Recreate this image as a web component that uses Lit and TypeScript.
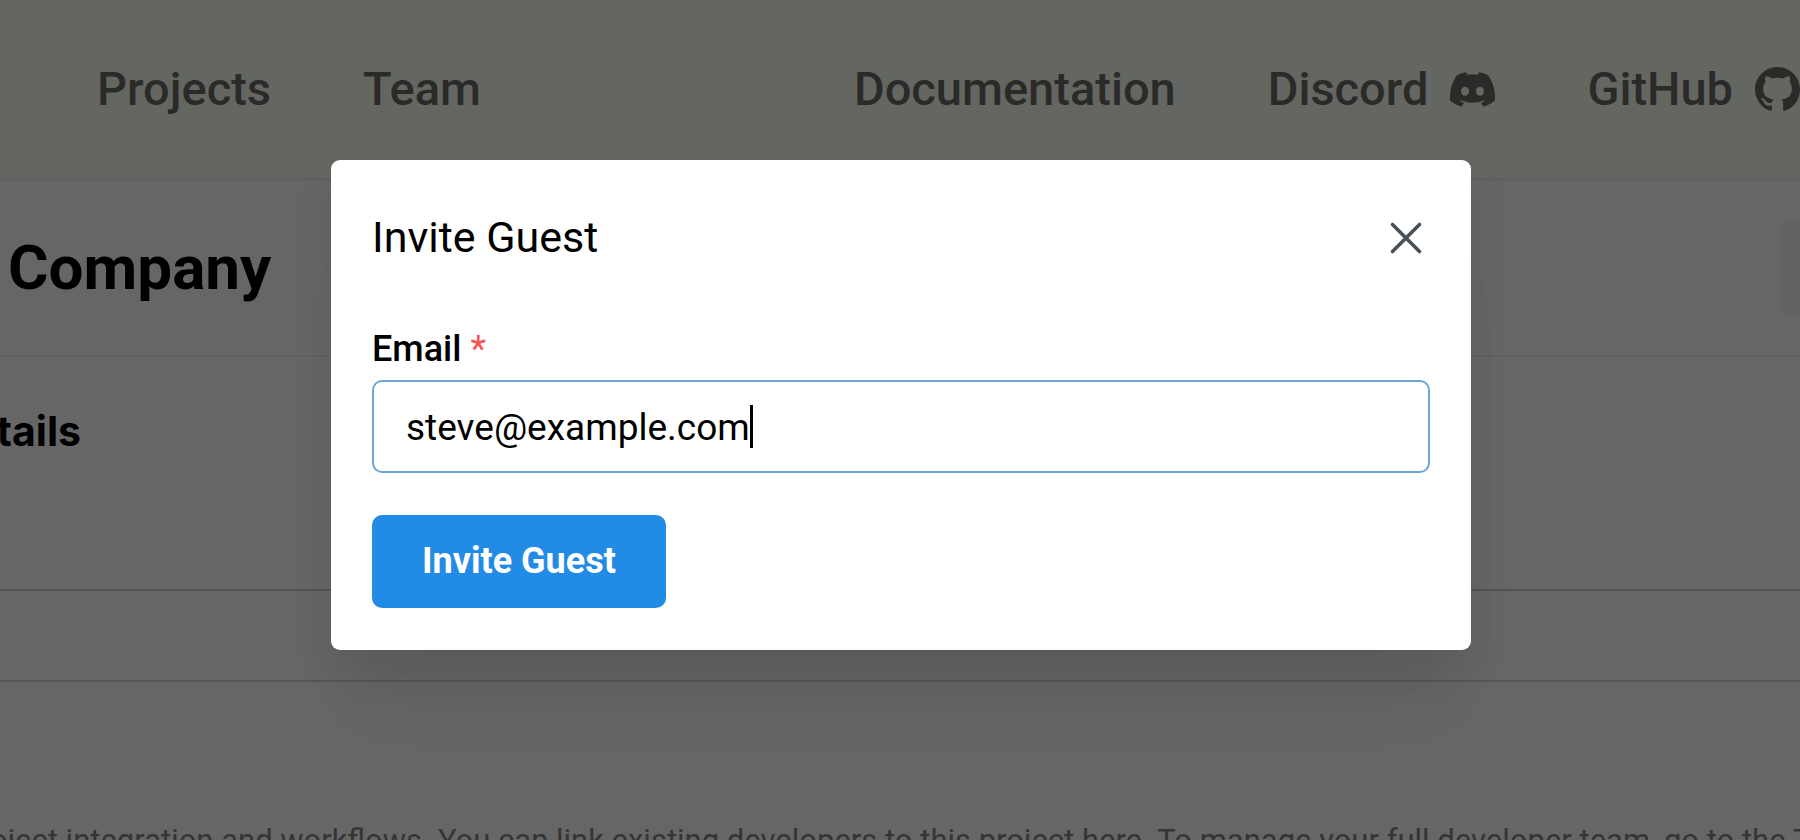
import { LitElement, html, css } from "lit";
import { customElement, state } from "lit/decorators.js";

@customElement("app-header")
class AppHeader extends LitElement {
  static styles = css`
    :host { display: block; }
    .bar {
      display: flex; align-items: center; justify-content: space-between;
      min-height: 178px; padding: 0 0 0 97px; overflow: hidden;
      background: #fafff4; border-bottom: 3px solid #f0f0f0;
    }
    .group { display: flex; align-items: center; gap: 92px; flex: none; }
    a {
      display: flex; align-items: center; gap: 22px; white-space: nowrap;
      color: #6a6d66; font: 500 47px/56px Roboto, sans-serif; text-decoration: none;
    }
    svg { width: 45px; height: 45px; fill: currentColor; display: block; flex: none; }
  `;
  render() {
    return html`<header class="bar">
      <nav class="group" aria-label="Main">
        <a href="#projects">Projects</a>
        <a href="#team">Team</a>
      </nav>
      <nav class="group" aria-label="Resources">
        <a href="#docs">Documentation</a>
        <a href="#discord">Discord
          <svg viewBox="0 0 16 16" aria-hidden="true"><path d="M13.545 2.907a13.2 13.2 0 0 0-3.257-1.011.05.05 0 0 0-.052.025c-.141.25-.297.577-.406.833a12.2 12.2 0 0 0-3.658 0 8 8 0 0 0-.412-.833.05.05 0 0 0-.052-.025c-1.125.194-2.22.534-3.257 1.011a.04.04 0 0 0-.021.018C.356 6.024-.213 9.047.066 12.032q.003.022.021.037a13.3 13.3 0 0 0 3.995 2.02.05.05 0 0 0 .056-.019q.463-.63.818-1.329a.05.05 0 0 0-.01-.059l-.018-.011a9 9 0 0 1-1.248-.595.05.05 0 0 1-.02-.066l.015-.019q.127-.095.248-.195a.05.05 0 0 1 .051-.007c2.619 1.196 5.454 1.196 8.041 0a.05.05 0 0 1 .053.007q.121.1.248.195a.05.05 0 0 1-.004.085 8 8 0 0 1-1.249.594.05.05 0 0 0-.03.03.05.05 0 0 0 .003.041c.24.465.515.909.817 1.329a.05.05 0 0 0 .056.019 13.2 13.2 0 0 0 4.001-2.02.05.05 0 0 0 .021-.037c.334-3.451-.559-6.449-2.366-9.106a.03.03 0 0 0-.02-.019m-8.198 7.307c-.789 0-1.438-.724-1.438-1.612s.637-1.613 1.438-1.613c.807 0 1.45.73 1.438 1.613 0 .888-.637 1.612-1.438 1.612m5.316 0c-.788 0-1.438-.724-1.438-1.612s.637-1.613 1.438-1.613c.807 0 1.451.73 1.438 1.613 0 .888-.631 1.612-1.438 1.612"/></svg>
        </a>
        <a href="#github">GitHub
          <svg viewBox="0 0 16 16" aria-hidden="true"><path d="M8 0C3.58 0 0 3.58 0 8c0 3.54 2.29 6.53 5.47 7.59.4.07.55-.17.55-.38 0-.19-.01-.82-.01-1.49-2.01.37-2.53-.49-2.69-.94-.09-.23-.48-.94-.82-1.13-.28-.15-.68-.52-.01-.53.63-.01 1.08.58 1.23.82.72 1.21 1.87.87 2.33.66.07-.52.28-.87.51-1.07-1.78-.2-3.64-.89-3.64-3.95 0-.87.31-1.59.82-2.15-.08-.2-.36-1.02.08-2.12 0 0 .67-.21 2.2.82.64-.18 1.32-.27 2-.27s1.36.09 2 .27c1.53-1.04 2.2-.82 2.2-.82.44 1.1.16 1.92.08 2.12.51.56.82 1.27.82 2.15 0 3.07-1.87 3.75-3.65 3.95.29.25.54.73.54 1.48 0 1.07-.01 1.93-.01 2.2 0 .21.15.46.55.38A8.01 8.01 0 0 0 16 8c0-4.42-3.58-8-8-8"/></svg>
        </a>
      </nav>
    </header>`;
  }
}

@customElement("invite-dialog")
class InviteDialog extends LitElement {
  @state() email = "steve@example.com";

  static styles = css`
    :host {
      display: block; box-sizing: border-box; width: 1140px; max-width: 90%;
      padding: 41px 41px 42px; border-radius: 9px; background: #fff; color: #000;
      font-family: Roboto, sans-serif;
      box-shadow: 0 80px 60px -28px rgba(0, 0, 0, 0.06), 0 20px 44px rgba(0, 0, 0, 0.08);
    }
    .head { display: flex; align-items: center; justify-content: space-between; }
    h2 { margin: 0; font-weight: 400; font-size: 43px; line-height: 73px; }
    .close {
      display: grid; place-items: center; width: 48px; height: 48px; padding: 0;
      border: 0; background: none; color: #495057;
    }
    .close svg { width: 36px; height: 36px; }
    form { display: flex; flex-direction: column; align-items: flex-start; padding-top: 46px; }
    label { font-weight: 500; font-size: 36px; line-height: 58px; }
    .star { color: #fa5252; font-weight: 400; }
    .field {
      display: flex; align-items: center; align-self: stretch; box-sizing: border-box;
      height: 93px; margin: 2px 0 42px; padding: 0 32px;
      border: 2px solid #6ba5da; border-radius: 10px;
    }
    input {
      field-sizing: content; min-width: 4px; padding: 2px 0 0; border: 0; outline: 0;
      background: none; color: #000; caret-color: transparent;
      font: 400 37px/48px Roboto, sans-serif;
    }
    .caret { width: 3px; height: 43px; background: #000; }
    .submit {
      height: 93px; padding: 0 50px 2px; border: 0; border-radius: 10px;
      background: #228be6; color: #fff; font: 700 36px/48px Roboto, sans-serif;
    }
  `;
  render() {
    return html`
      <div class="head">
        <h2>Invite Guest</h2>
        <button class="close" type="button" aria-label="Close">
          <svg viewBox="0 0 36 36" fill="none" stroke="currentColor" stroke-width="3.6" stroke-linecap="round" aria-hidden="true"><path d="M4.500 4.500 31.500 31.500M31.500 4.500 4.500 31.500"/></svg>
        </button>
      </div>
      <form @submit=${(e: Event) => e.preventDefault()}>
        <label for="email">Email <span class="star">*</span></label>
        <div class="field">
          <input id="email" type="text" inputmode="email" required .value=${this.email}
            @input=${(e: InputEvent) => (this.email = (e.target as HTMLInputElement).value)} />
          <span class="caret"></span>
        </div>
        <button class="submit" type="submit">Invite Guest</button>
      </form>`;
  }
}

@customElement("app-root")
class AppRoot extends LitElement {
  static styles = css`
    :host {
      display: block; position: relative; height: 100vh; overflow: hidden;
      background: #fff; color: #000; font-family: Roboto, sans-serif;
    }
    .title {
      display: flex; align-items: center; justify-content: space-between;
      height: 174px; padding-left: 8px; border-bottom: 2px solid #f1f3f5;
    }
    h1 { margin: 0; font-weight: 700; font-size: 62px; line-height: 72px; }
    .action { width: 20px; height: 92px; border: 0; border-radius: 10px 0 0 10px; background: #f5f5fc; }
    .section { height: 232px; border-bottom: 2px solid #d0d0d0; }
    h2 {
      display: flex; justify-content: flex-end; width: 81px; margin: 0; padding-top: 49px;
      overflow: hidden; font: 700 41px/50px Inter, sans-serif;
    }
    .row { height: 89px; border-bottom: 2px solid #d4d4d4; }
    p {
      margin: 0; padding-top: 137px; color: #868686; font-size: 31px; line-height: 44px;
      text-indent: -10px; white-space: nowrap;
    }
    .overlay {
      position: absolute; inset: 0; display: flex; justify-content: center; align-items: flex-start;
      padding: 160px 0 0 2px; background: rgba(0, 0, 0, 0.6);
    }
  `;
  render() {
    return html`
      <app-header></app-header>
      <main>
        <div class="title"><h1>Company</h1><button class="action" aria-label="More actions"></button></div>
        <section class="section"><h2>tails</h2></section>
        <div class="row"></div>
        <p>oject integration and workflows. You can link existing developers to this project here. To manage your full developer team, go to the T</p>
      </main>
      <div class="overlay">
        <invite-dialog role="dialog" aria-modal="true" aria-label="Invite Guest"></invite-dialog>
      </div>`;
  }
}
